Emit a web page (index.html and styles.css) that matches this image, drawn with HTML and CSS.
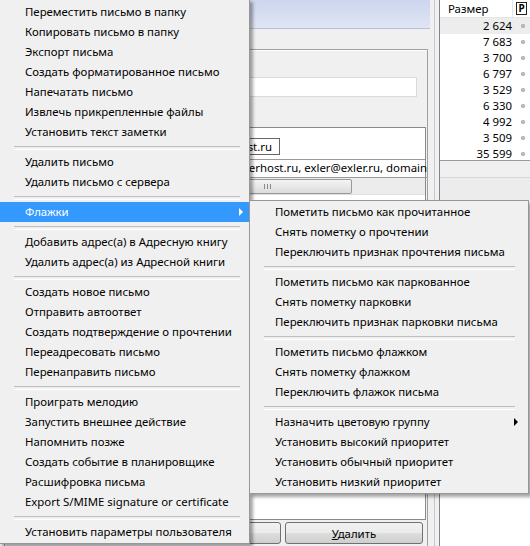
FILE: index.html
```html
<!DOCTYPE html>
<html lang="ru">
<head>
<meta charset="utf-8">
<title>Menu</title>
<link rel="stylesheet" href="styles.css">
</head>
<body>
<div class="app">
  <div class="pane">
    <div class="banner"></div>
    <div class="group">
      <div class="field"></div>
      <div class="box">
        <div class="addr-row"><span class="chip">info@peterhost.ru</span></div>
        <div class="addr-line"><span>support@peterhost.ru, exler@exler.ru, domain</span></div>
        <div class="hscroll"><div class="thumb"><span class="grip"></span></div></div>
        <div class="box-rest"></div>
      </div>
      <div class="buttons">
        <button class="btn btn-a"></button>
        <button class="btn btn-b"><u>У</u>далить</button>
      </div>
    </div>
  </div>
  <div class="splitter"></div>
  <div class="side">
    <div class="list">
      <div class="list-head">
        <div class="col-size">Размер</div>
        <div class="col-p"><span class="p-icon">P</span></div>
      </div>
      <div class="list-body">
        <div class="row sel"><span class="num">2 624</span><span class="dot"></span></div>
        <div class="row"><span class="num">7 683</span><span class="dot"></span></div>
        <div class="row"><span class="num">3 700</span><span class="dot"></span></div>
        <div class="row"><span class="num">6 797</span><span class="dot"></span></div>
        <div class="row"><span class="num">3 529</span><span class="dot"></span></div>
        <div class="row"><span class="num">6 330</span><span class="dot"></span></div>
        <div class="row"><span class="num">4 992</span><span class="dot"></span></div>
        <div class="row"><span class="num">3 509</span><span class="dot"></span></div>
        <div class="row"><span class="num">35 599</span><span class="dot"></span></div>
      </div>
    </div>
    <div class="status"></div>
    <div class="side-gray"></div>
    <div class="side-white"></div>
  </div>
</div>

<div class="menu main-menu">
  <div class="item">Переместить письмо в папку</div>
  <div class="item">Копировать письмо в папку</div>
  <div class="item">Экспорт письма</div>
  <div class="item">Создать форматированное письмо</div>
  <div class="item">Напечатать письмо</div>
  <div class="item">Извлечь прикрепленные файлы</div>
  <div class="item">Установить текст заметки</div>
  <div class="sep"></div>
  <div class="item">Удалить письмо</div>
  <div class="item">Удалить письмо с сервера</div>
  <div class="sep"></div>
  <div class="item active has-sub">Флажки</div>
  <div class="sep"></div>
  <div class="item">Добавить адрес(а) в Адресную книгу</div>
  <div class="item">Удалить адрес(а) из Адресной книги</div>
  <div class="sep"></div>
  <div class="item">Создать новое письмо</div>
  <div class="item">Отправить автоответ</div>
  <div class="item">Создать подтверждение о прочтении</div>
  <div class="item">Переадресовать письмо</div>
  <div class="item">Перенаправить письмо</div>
  <div class="sep"></div>
  <div class="item">Проиграть мелодию</div>
  <div class="item">Запустить внешнее действие</div>
  <div class="item">Напомнить позже</div>
  <div class="item">Создать событие в планировщике</div>
  <div class="item">Расшифровка письма</div>
  <div class="item">Export S/MIME signature or certificate</div>
  <div class="sep"></div>
  <div class="item">Установить параметры пользователя</div>
</div>

<div class="menu sub-menu">
  <div class="item">Пометить письмо как прочитанное</div>
  <div class="item">Снять пометку о прочтении</div>
  <div class="item">Переключить признак прочтения письма</div>
  <div class="sep"></div>
  <div class="item">Пометить письмо как паркованное</div>
  <div class="item">Снять пометку парковки</div>
  <div class="item">Переключить признак парковки письма</div>
  <div class="sep"></div>
  <div class="item">Пометить письмо флажком</div>
  <div class="item">Снять пометку флажком</div>
  <div class="item">Переключить флажок письма</div>
  <div class="sep"></div>
  <div class="item has-sub">Назначить цветовую группу</div>
  <div class="item">Установить высокий приоритет</div>
  <div class="item">Установить обычный приоритет</div>
  <div class="item">Установить низкий приоритет</div>
</div>
</body>
</html>
```

FILE: styles.css
```css
* { box-sizing: border-box; }
html, body { margin: 0; padding: 0; }
body {
  width: 530px;
  height: 546px;
  overflow: hidden;
  position: relative;
  background: #f0f0f0;
  font-family: "Noto Sans", "Liberation Sans", sans-serif;
  font-size: 11.4px;
  color: #000;
}

.app { display: flex; height: 546px; }

/* ---------- middle pane ---------- */
.pane {
  width: 430px;
  flex: none;
  display: flex;
  flex-direction: column;
  background: #f0f0f0;
}
.banner {
  height: 29px;
  flex: none;
  background: linear-gradient(#cdd6ee, #dfe5f4);
  border-bottom: 1px solid #b9c0cf;
}
.group {
  flex: 1;
  margin: 20px 2px 0 4px;
  border: 1px solid #a0a0a0;
  border-bottom: none;
  box-shadow: inset 1px 1px 0 #fff;
  display: flex;
  flex-direction: column;
}
.field {
  height: 20px;
  margin: 27px 10px 0 0;
  background: #fff;
  border: 1px solid #dadada;
  flex: none;
}
.box {
  margin: 30px 1px 0 0;
  height: 393px;
  flex: none;
  background: #fff;
  border: 1px solid #8a8a8a;
  display: flex;
  flex-direction: column;
}
.addr-row {
  height: 32px;
  flex: none;
  border-bottom: 1px solid #9a9a9a;
  padding-top: 10px;
  display: flex;
  justify-content: flex-end;
  padding-right: 145px;
}
.chip {
  height: 17px;
  line-height: 15px;
  border: 1px solid #666;
  padding: 0 7px 0 0;
  white-space: nowrap;
  color: #000;
}
.addr-line {
  height: 18px;
  flex: none;
  border-bottom: 1px solid #9a9a9a;
  display: flex;
  justify-content: flex-end;
  overflow: hidden;
  white-space: nowrap;
  line-height: 16px;
  margin-right: -2px;
}
.hscroll {
  height: 17px;
  flex: none;
  background: #ececec;
  border-bottom: 1px solid #e0e0e0;
  padding: 1px 0 1px 0;
  display: flex;
}
.thumb {
  width: 346px;
  height: 15px;
  border: 1px solid #9a9a9a;
  border-radius: 2px;
  background: linear-gradient(#f4f4f4, #dcdcdc);
  display: flex;
  align-items: center;
  padding-left: 257px;
}
.grip {
  width: 7px;
  height: 5px;
  background: repeating-linear-gradient(90deg, #8a8a8a 0 1px, transparent 1px 3px);
}
.box-rest { flex: 1; background: #fff; }

.buttons {
  display: flex;
  justify-content: flex-end;
  gap: 4px;
  margin: 2px 4px 0 0;
}
.btn {
  height: 22px;
  border: 1px solid #707070;
  border-radius: 3px;
  background: linear-gradient(#f2f2f2 0%, #ebebeb 50%, #dddddd 51%, #cfcfcf 100%);
  font-family: inherit;
  font-size: 11.4px;
  color: #000;
  padding: 0;
}
.btn-a { width: 200px; }
.btn-b { width: 138px; }

.splitter {
  width: 9px;
  flex: none;
  background: #f0f0f0;
  box-shadow: inset 4px 0 0 #f0f0f0, inset 5px 0 0 #c8c8c8;
}

/* ---------- right list ---------- */
.side {
  flex: 1;
  display: flex;
  flex-direction: column;
  border-left: 1px solid #7d8590;
}
.list {
  height: 161px;
  flex: none;
  background: #fff;
  border-bottom: 1px solid #9a9a9a;
  overflow: hidden;
}
.list-head {
  height: 18px;
  display: flex;
  border-bottom: 1px solid #e4e4e4;
  background: #fff;
}
.col-size {
  width: 73px;
  padding-left: 8px;
  line-height: 17px;
  border-right: 1px solid #e4e4e4;
}
.col-p {
  flex: 1;
  display: flex;
  align-items: center;
  padding-left: 3px;
}
.p-icon {
  display: inline-block;
  width: 11px;
  height: 13px;
  border: 1px solid #222;
  font-size: 10px;
  line-height: 11px;
  text-align: center;
  font-weight: bold;
}
.row {
  height: 16px;
  display: flex;
  align-items: center;
  line-height: 16px;
}
.row.sel { background: #ededed; }
.num {
  width: 72px;
  text-align: right;
  white-space: nowrap;
}
.dot {
  width: 4px;
  height: 4px;
  border-radius: 50%;
  background: radial-gradient(#c8d0da, #7e8a98);
  margin-left: 9px;
}
.status {
  height: 17px;
  flex: none;
  background: #f0f0f0;
  border-bottom: 1px solid #d8d8d8;
}
.side-gray { height: 22px; flex: none; background: #ececec; }
.side-white { flex: 1; background: #fff; }

/* ---------- menus ---------- */
.menu {
  position: absolute;
  background: #f0f0f0;
  border: 1px solid #979797;
  box-shadow: 3px 3px 3px rgba(0, 0, 0, 0.35);
}
.main-menu {
  left: -1px;
  top: -1px;
  width: 251px;
  padding: 2px 0 1px;
}
.sub-menu {
  left: 249px;
  top: 200px;
  width: 280px;
  padding: 1px 0 1px;
}
.item {
  height: 20px;
  line-height: 20px;
  padding-left: 25px;
  white-space: nowrap;
  position: relative;
}
.item.active { background: #3399ff; color: #fff; }
.item.has-sub::after {
  content: "";
  position: absolute;
  top: 6px;
  right: 6px;
  border-left: 4px solid #000;
  border-top: 4px solid transparent;
  border-bottom: 4px solid transparent;
}
.item.active.has-sub::after { border-left-color: #fff; }
.sub-menu .item.has-sub::after { right: 10px; }
.sep {
  height: 10px;
  padding-top: 4px;
}
.sep::before {
  content: "";
  display: block;
  height: 2px;
  border-top: 1px solid #bdbdbd;
  border-bottom: 1px solid #ffffff;
}
.main-menu .sep::before { margin: 0 9px 0 14px; }
.sub-menu .sep::before { margin: 0 13px 0 14px; }
```
